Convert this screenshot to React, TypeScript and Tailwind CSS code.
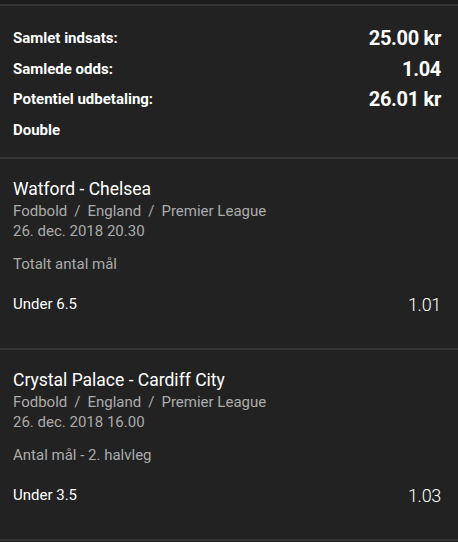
import React from 'react';

interface Selection {
  match: string;
  path: string[];
  date: string;
  market: string;
  pick: string;
  odds: string;
}

const selections: Selection[] = [
  {
    match: 'Watford - Chelsea',
    path: ['Fodbold', 'England', 'Premier League'],
    date: '26. dec. 2018 20.30',
    market: 'Totalt antal mål',
    pick: 'Under 6.5',
    odds: '1.01',
  },
  {
    match: 'Crystal Palace - Cardiff City',
    path: ['Fodbold', 'England', 'Premier League'],
    date: '26. dec. 2018 16.00',
    market: 'Antal mål - 2. halvleg',
    pick: 'Under 3.5',
    odds: '1.03',
  },
];

const summary = [
  { label: 'Samlet indsats:', value: '25.00 kr' },
  { label: 'Samlede odds:', value: '1.04' },
  { label: 'Potentiel udbetaling:', value: '26.01 kr' },
];

const SelectionCard = ({ s }: { s: Selection }) => (
  <div className="border-t-2 border-[#353535] pl-[13px] pr-[17px] pt-[18px] h-[191px]">
    <p className="text-[17.5px] leading-[24px] text-white">{s.match}</p>
    <p className="text-[15px] leading-[20px] text-[#ababab]">
      {s.path.map((p, i) => (
        <span key={i}>
          {i > 0 && <span className="px-[7px]">/</span>}
          {p}
        </span>
      ))}
    </p>
    <p className="text-[15px] leading-[20px] text-[#ababab]">{s.date}</p>
    <p className="mt-[13px] text-[15px] leading-[20px] text-[#ababab]">{s.market}</p>
    <div className="mt-[20px] flex items-center justify-between h-[20px]">
      <span className="text-[15px] text-white">{s.pick}</span>
      <span className="text-[18px] font-light text-white tracking-[-0.3px]">{s.odds}</span>
    </div>
  </div>
);

export default function App() {
  return (
    <div className="w-[458px] h-[542px] overflow-hidden bg-[#222222] font-['Roboto',sans-serif]">
      <div className="h-[4px] bg-[#1d1d1d]" />
      <div className="border-t-2 border-[#353535] pl-[13px] pr-[17px] pt-[17px] h-[153px]">
        {summary.map((row) => (
          <div key={row.label} className="flex items-center justify-between h-[30.5px]">
            <span className="text-[15px] font-bold text-white">{row.label}</span>
            <span className="text-[20px] font-bold text-white tracking-[-0.3px]">{row.value}</span>
          </div>
        ))}
        <div className="flex items-center h-[30.5px]">
          <span className="text-[15px] font-bold text-white">Double</span>
        </div>
      </div>
      {selections.map((s) => (
        <SelectionCard key={s.match} s={s} />
      ))}
      <div className="border-t-2 border-[#353535]" />
    </div>
  );
}
